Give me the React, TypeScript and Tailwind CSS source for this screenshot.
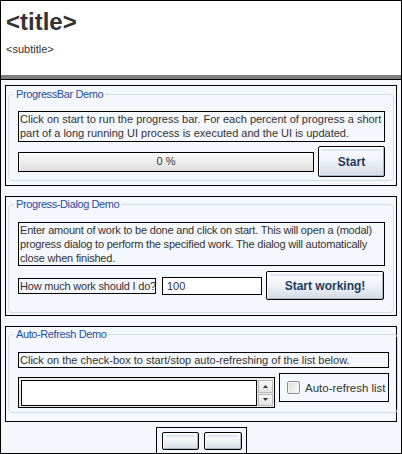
import React from "react";

function Btn({ children, className = "" }: { children?: React.ReactNode; className?: string }) {
  return (
    <div
      className={`border border-black rounded-[2px] bg-[linear-gradient(#fdfeff,#f0f3f8_45%,#d5dbe4)] shadow-[inset_1px_1px_0_#ffffff,inset_-1px_-1px_0_#aeb7c4] flex items-center justify-center relative ${className}`}
    >
      <div className="absolute left-[3px] right-[3px] top-[2px] h-[2px] bg-[#dde7f3]" />
      <span className="relative text-[12px] font-bold text-[#1f3a60]">{children}</span>
    </div>
  );
}

function Panel({
  title,
  h,
  mt,
  pt,
  children,
}: {
  title: string;
  h: string;
  mt: string;
  pt: string;
  children: React.ReactNode;
}) {
  return (
    <div className={`border border-black px-[2px] ${h} ${mt}`}>
      <fieldset className={`border border-[#d3dbe4] rounded-[4px] pl-[9px] pr-[8px] ${pt}`}>
        <legend className="ml-[-4px] px-[2px] text-[11px] tracking-[-0.4px] leading-[14px] text-[#1f4fa3]">{title}</legend>
        {children}
      </fieldset>
    </div>
  );
}

export default function App() {
  return (
    <div className="w-[402px] h-[454px] border border-black bg-[#f4f7fc] flex flex-col overflow-hidden font-['Liberation_Sans',Arial,sans-serif] text-[#333]">
      <div className="h-[74px] bg-white px-[5px] pt-[9px] shrink-0">
        <div className="text-[24px] font-bold leading-[24px] text-[#333]">&lt;title&gt;</div>
        <div className="mt-[9px] text-[11px] leading-[13px] text-[#333]">&lt;subtitle&gt;</div>
      </div>
      <div className="h-[5px] bg-[#808080] border-b border-black shrink-0" />
      <div className="px-[4px] flex flex-col">
        <Panel title="ProgressBar Demo" h="h-[101px]" mt="mt-[5px]" pt="pt-[10px] mt-[1px]">
          <div className="border border-black text-[11px] leading-[14px] px-[1px] pb-[1px] whitespace-nowrap overflow-hidden">
            Click on start to run the progress bar. For each percent of progress a short
            <br />
            part of a long running UI process is executed and the UI is updated.
          </div>
          <div className="flex items-center gap-[4px] mt-[4px] pb-[3px]">
            <div className="flex-1 h-[20px] border border-black bg-[linear-gradient(#fbfbfb,#eeeeee_50%,#dcdcdc)] shadow-[inset_1px_1px_0_#ffffff] flex items-center justify-center text-[11px]">
              0 %
            </div>
            <Btn className="w-[67px] h-[31px]">Start</Btn>
          </div>
        </Panel>
        <Panel title="Progress-Dialog Demo" h="h-[120px]" mt="mt-[10px]" pt="pt-[11px]">
          <div className="border border-black text-[11px] leading-[14px] px-[1px] whitespace-nowrap overflow-hidden tracking-[-0.2px]">
            Enter amount of work to be done and click on start. This will open a (modal)
            <br />
            progress dialog to perform the specified work. The dialog will automatically
            <br />
            close when finished.
          </div>
          <div className="flex items-center mt-[5px] pb-[12px]">
            <div className="w-[138px] h-[16px] border border-black text-[11px] leading-[14px] px-[1px] whitespace-nowrap tracking-[-0.2px] overflow-hidden">
              How much work should I do?
            </div>
            <div className="ml-[6px] w-[100px] h-[18px] border border-black bg-white px-[4px] text-[11px] leading-[16px]">
              100
            </div>
            <Btn className="ml-[4px] w-[118px] h-[29px]">Start working!</Btn>
          </div>
        </Panel>
        <Panel title="Auto-Refresh Demo" h="h-[96px]" mt="mt-[10px]" pt="pt-[11px]">
          <div className="border border-black text-[11px] leading-[14px] px-[1px] whitespace-nowrap">
            Click on the check-box to start/stop auto-refreshing of the list below.
          </div>
          <div className="flex items-start mt-[5px] pb-[4px]">
            <div className="mt-[4px] w-[257px] h-[31px] border border-black bg-[#ececec] flex pl-[2px] pt-[2px] pb-[1px]">
              <div className="flex-1 border border-black bg-white" />
              <div className="w-[17px] flex flex-col gap-[1px] px-[1px]">
                <div className="flex-1 border border-[#b8b8b8] bg-[linear-gradient(#fafafa,#e2e2e2)] flex items-center justify-center">
                  <svg width="5" height="3" viewBox="0 0 5 3">
                    <path d="M2.5 0 L5 3 L0 3 Z" fill="#333" />
                  </svg>
                </div>
                <div className="flex-1 border border-[#b8b8b8] bg-[linear-gradient(#fafafa,#e2e2e2)] flex items-center justify-center">
                  <svg width="5" height="3" viewBox="0 0 5 3">
                    <path d="M0 0 L5 0 L2.5 3 Z" fill="#333" />
                  </svg>
                </div>
              </div>
            </div>
            <div className="ml-[4px] w-[110px] h-[29px] border border-black flex items-center pl-[7px] gap-[5px]">
              <div className="w-[13px] h-[13px] rounded-[2px] border border-[#8e8f8f] bg-[linear-gradient(135deg,#dcdcdc,#fbfbfb)] shadow-[inset_0_0_0_1px_#f4f4f4]" />
              <span className="text-[11.5px] leading-[14px] whitespace-nowrap">Auto-refresh list</span>
            </div>
          </div>
        </Panel>
        <div className="mt-[5px] mx-auto w-[91px] h-[26px] border-t border-x border-black flex gap-[5px] pl-[5px] pt-[4px]">
          <Btn className="w-[37px] h-[18px]" />
          <Btn className="w-[38px] h-[18px]" />
        </div>
      </div>
    </div>
  );
}
